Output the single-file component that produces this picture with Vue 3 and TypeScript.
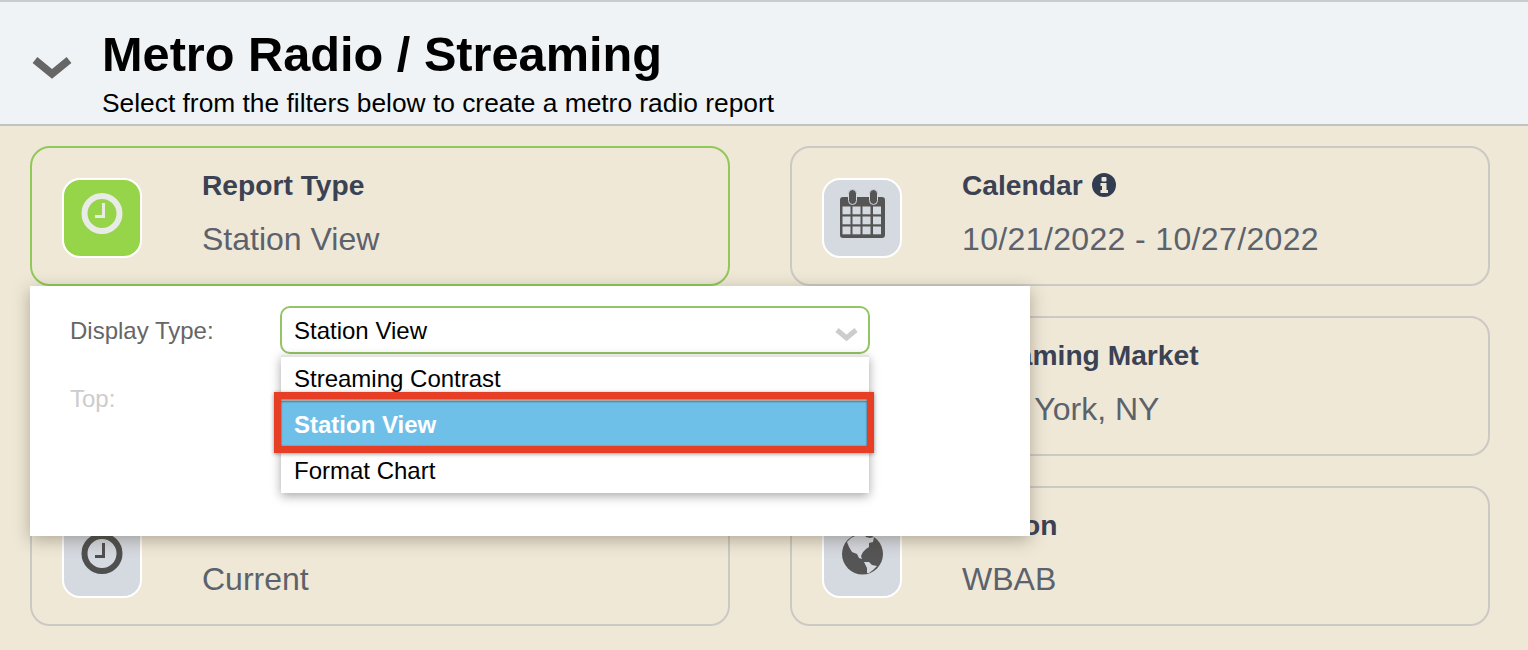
<script setup lang="ts">
interface Card { title: string; value: string; icon: string; active?: boolean; info?: boolean; date?: boolean }
const cards: Card[] = [
  { title: 'Report Type', value: 'Station View', icon: 'clock', active: true },
  { title: 'Calendar', value: '10/21/2022 - 10/27/2022', icon: 'calendar', info: true, date: true },
  { title: '', value: '', icon: 'none' },
  { title: 'Streaming Market', value: 'New York, NY', icon: 'none' },
  { title: '', value: 'Current', icon: 'clock' },
  { title: 'Station', value: 'WBAB', icon: 'globe' },
]
const cells: { x: number; y: number }[] = []
for (const y of [28.5, 38.5, 48.5]) for (const x of [20.5, 30.5, 40.5, 51]) cells.push({ x, y })
const options = ['Streaming Contrast', 'Station View', 'Format Chart']
</script>

<template>
  <div class="page">
    <header class="head">
      <svg class="toggle" viewBox="0 0 40 24" width="40" height="24">
        <path d="M3 5 L20 19 L37 5" fill="none" stroke="#666" stroke-width="7.5" stroke-linejoin="miter" />
      </svg>
      <div class="head-text">
        <h1>Metro Radio / Streaming</h1>
        <p>Select from the filters below to create a metro radio report</p>
      </div>
    </header>

    <main class="grid">
      <section v-for="(c, i) in cards" :key="i" class="card" :class="{ active: c.active }">
        <div class="tile">
          <svg viewBox="2 2 76 76" width="76" height="76">
            <g v-if="c.icon === 'clock'" :class="c.active ? 'ico-light' : 'ico-dark'">
              <circle cx="40" cy="35.5" r="17.5" fill="none" stroke-width="6" class="ring" />
              <path d="M41.5 25 V38.5 H33" fill="none" stroke-width="3" class="ring" />
            </g>
            <g v-else-if="c.icon === 'calendar'">
              <rect x="18" y="19" width="45" height="41" rx="3" fill="#555" />
              <rect x="26.5" y="11.5" width="8" height="15" rx="4" fill="#555" stroke="#d5d9e0" stroke-width="1" />
              <rect x="47.5" y="11.5" width="8" height="15" rx="4" fill="#555" stroke="#d5d9e0" stroke-width="1" />
              <rect v-for="(cell, k) in cells" :key="k" :x="cell.x" :y="cell.y" width="8" height="7.8" fill="#d5d9e0" />
            </g>
            <g v-else-if="c.icon === 'globe'">
              <circle cx="40.5" cy="36" r="20.5" fill="#555" />
              <path d="M25 24 L29 20 L36 16.5 L42 16 L44 19 L48 20 L52 19 L51 24 L47 25 L47 29 L44 31 L41 34 L39 38 L40 41 L37 40 L35 36 L30 34 L27 29 Z" fill="#d5d9e0" />
              <path d="M42 44 L47 44 L50 47 L55 48 L51 52 L47 55 L45 55 L45 50 Z" fill="#d5d9e0" />
            </g>
          </svg>
        </div>
        <div class="card-text">
          <h2>{{ c.title || '\u00a0' }}
            <svg v-if="c.info" class="info" viewBox="0 0 24 24" width="24" height="24">
              <circle cx="12" cy="12" r="12" fill="#323c50" />
              <rect x="9.5" y="4" width="5" height="4.5" rx="1" fill="#efe8d7" />
              <path d="M8.5 10 H14.5 V17 H16 V20 H8.5 V17 H10 V13 H8.5 Z" fill="#efe8d7" />
            </svg>
          </h2>
          <div class="value" :class="{ date: c.date }">{{ c.value }}</div>
        </div>
      </section>

      <div class="popover">
        <div class="row">
          <label>Display Type:</label>
          <div class="select">
            <span class="current">Station View</span>
            <svg class="caret" viewBox="0 0 26 16" width="26" height="16">
              <path d="M3 4 L12.5 12 L22 4" fill="none" stroke="#ccc" stroke-width="5" />
            </svg>
            <ul class="menu">
              <li v-for="o in options" :key="o" :class="{ sel: o === 'Station View' }">{{ o }}</li>
            </ul>
            <div class="callout"></div>
          </div>
        </div>
        <div class="row top-row"><label>Top:</label></div>
      </div>
    </main>
  </div>
</template>

<style>
html, body { margin: 0; background: #efe8d7; overflow: hidden; }
</style>

<style scoped>
.page {
  width: 1528px;
  height: 650px;
  background: #efe8d7;
  font-family: "Liberation Sans", Arial, sans-serif;
  overflow: hidden;
}
.head {
  box-sizing: border-box;
  height: 126px;
  background: #eff3f5;
  border-top: 2px solid #c9cbcd;
  border-bottom: 2px solid #bfc1c3;
  display: flex;
  align-items: flex-start;
  padding-left: 32px;
}
.toggle { margin-top: 53px; margin-right: 30px; flex: none; }
.head-text { padding-top: 25px; }
h1 { margin: 0; font-size: 48.7px; line-height: 54px; font-weight: 700; color: #000; }
.head-text p { margin: 8px 0 0; font-size: 26.35px; line-height: 28px; color: #000; }
.grid {
  position: relative;
  margin: 20px 38px 0 30px;
  display: grid;
  grid-template-columns: 700px 700px;
  grid-auto-rows: 140px;
  gap: 30px 60px;
}
.card {
  box-sizing: border-box;
  border: 2px solid #ccc9c4;
  border-radius: 20px;
  display: flex;
  padding: 30px 0 0 30px;
}
.card.active { border-color: #90c85a; }
.tile {
  box-sizing: border-box;
  width: 80px;
  height: 80px;
  flex: none;
  border: 2px solid #fff;
  border-radius: 18px;
  background: #d5d9e0;
}
.card.active .tile { background: #96d44a; }
.tile svg { display: block; }
.ico-light .ring { stroke: #e9ece6; }
.ico-dark .ring { stroke: #4f4f4f; }
.card-text { margin-left: 60px; margin-top: -9px; }
h2 {
  margin: 0;
  font-size: 28.2px;
  line-height: 32px;
  font-weight: 700;
  color: #3a4254;
  display: flex;
  align-items: center;
  gap: 9px;
}
.value { margin-top: 19px; font-size: 32px; line-height: 38px; color: #5c626c; }
.value.date { letter-spacing: 0.36px; }
.popover {
  position: absolute;
  top: 140px;
  left: 0;
  box-sizing: border-box;
  width: 1000px;
  height: 250px;
  background: #fff;
  box-shadow: 0 4px 16px rgba(60, 50, 30, 0.35);
  padding: 20px 0 0 40px;
}
.row { display: flex; align-items: center; height: 48px; }
.row label { width: 210px; flex: none; font-size: 24px; padding-top: 2px; color: #666; }
.top-row { margin-top: 20px; }
.top-row label { color: #ccc; }
.select {
  position: relative;
  box-sizing: border-box;
  width: 590px;
  height: 48px;
  border: 2px solid #95c465;
  border-radius: 10px;
  background: #fff;
  display: flex;
  align-items: center;
  padding-left: 12px;
  font-size: 24px;
  color: #000;
}
.current { padding-top: 2px; }
.caret { position: absolute; right: 8px; top: 18px; }
.menu {
  position: absolute;
  top: 47px;
  left: -1px;
  width: 588px;
  margin: 0;
  padding: 0;
  list-style: none;
  background: #fff;
  box-shadow: inset 0 2px 0 #e4e4e4, 0 3px 10px rgba(0, 0, 0, 0.35);
}
.menu li {
  box-sizing: border-box;
  height: 46px;
  line-height: 48px;
  padding-left: 13px;
  color: #000;
}
.menu li.sel {
  background: #6fc0e9;
  color: #fff;
  font-weight: 700;
  line-height: 47px;
}
.callout {
  position: absolute;
  top: 84px;
  left: -8px;
  width: 600px;
  height: 61px;
  box-sizing: border-box;
  border: 7px solid #e63f26;
  box-shadow: 0 1px 4px rgba(0, 0, 0, 0.4), inset 0 3px 2px rgba(0, 0, 0, 0.35), inset 0 0 2px rgba(0, 0, 0, 0.35);
}
</style>
